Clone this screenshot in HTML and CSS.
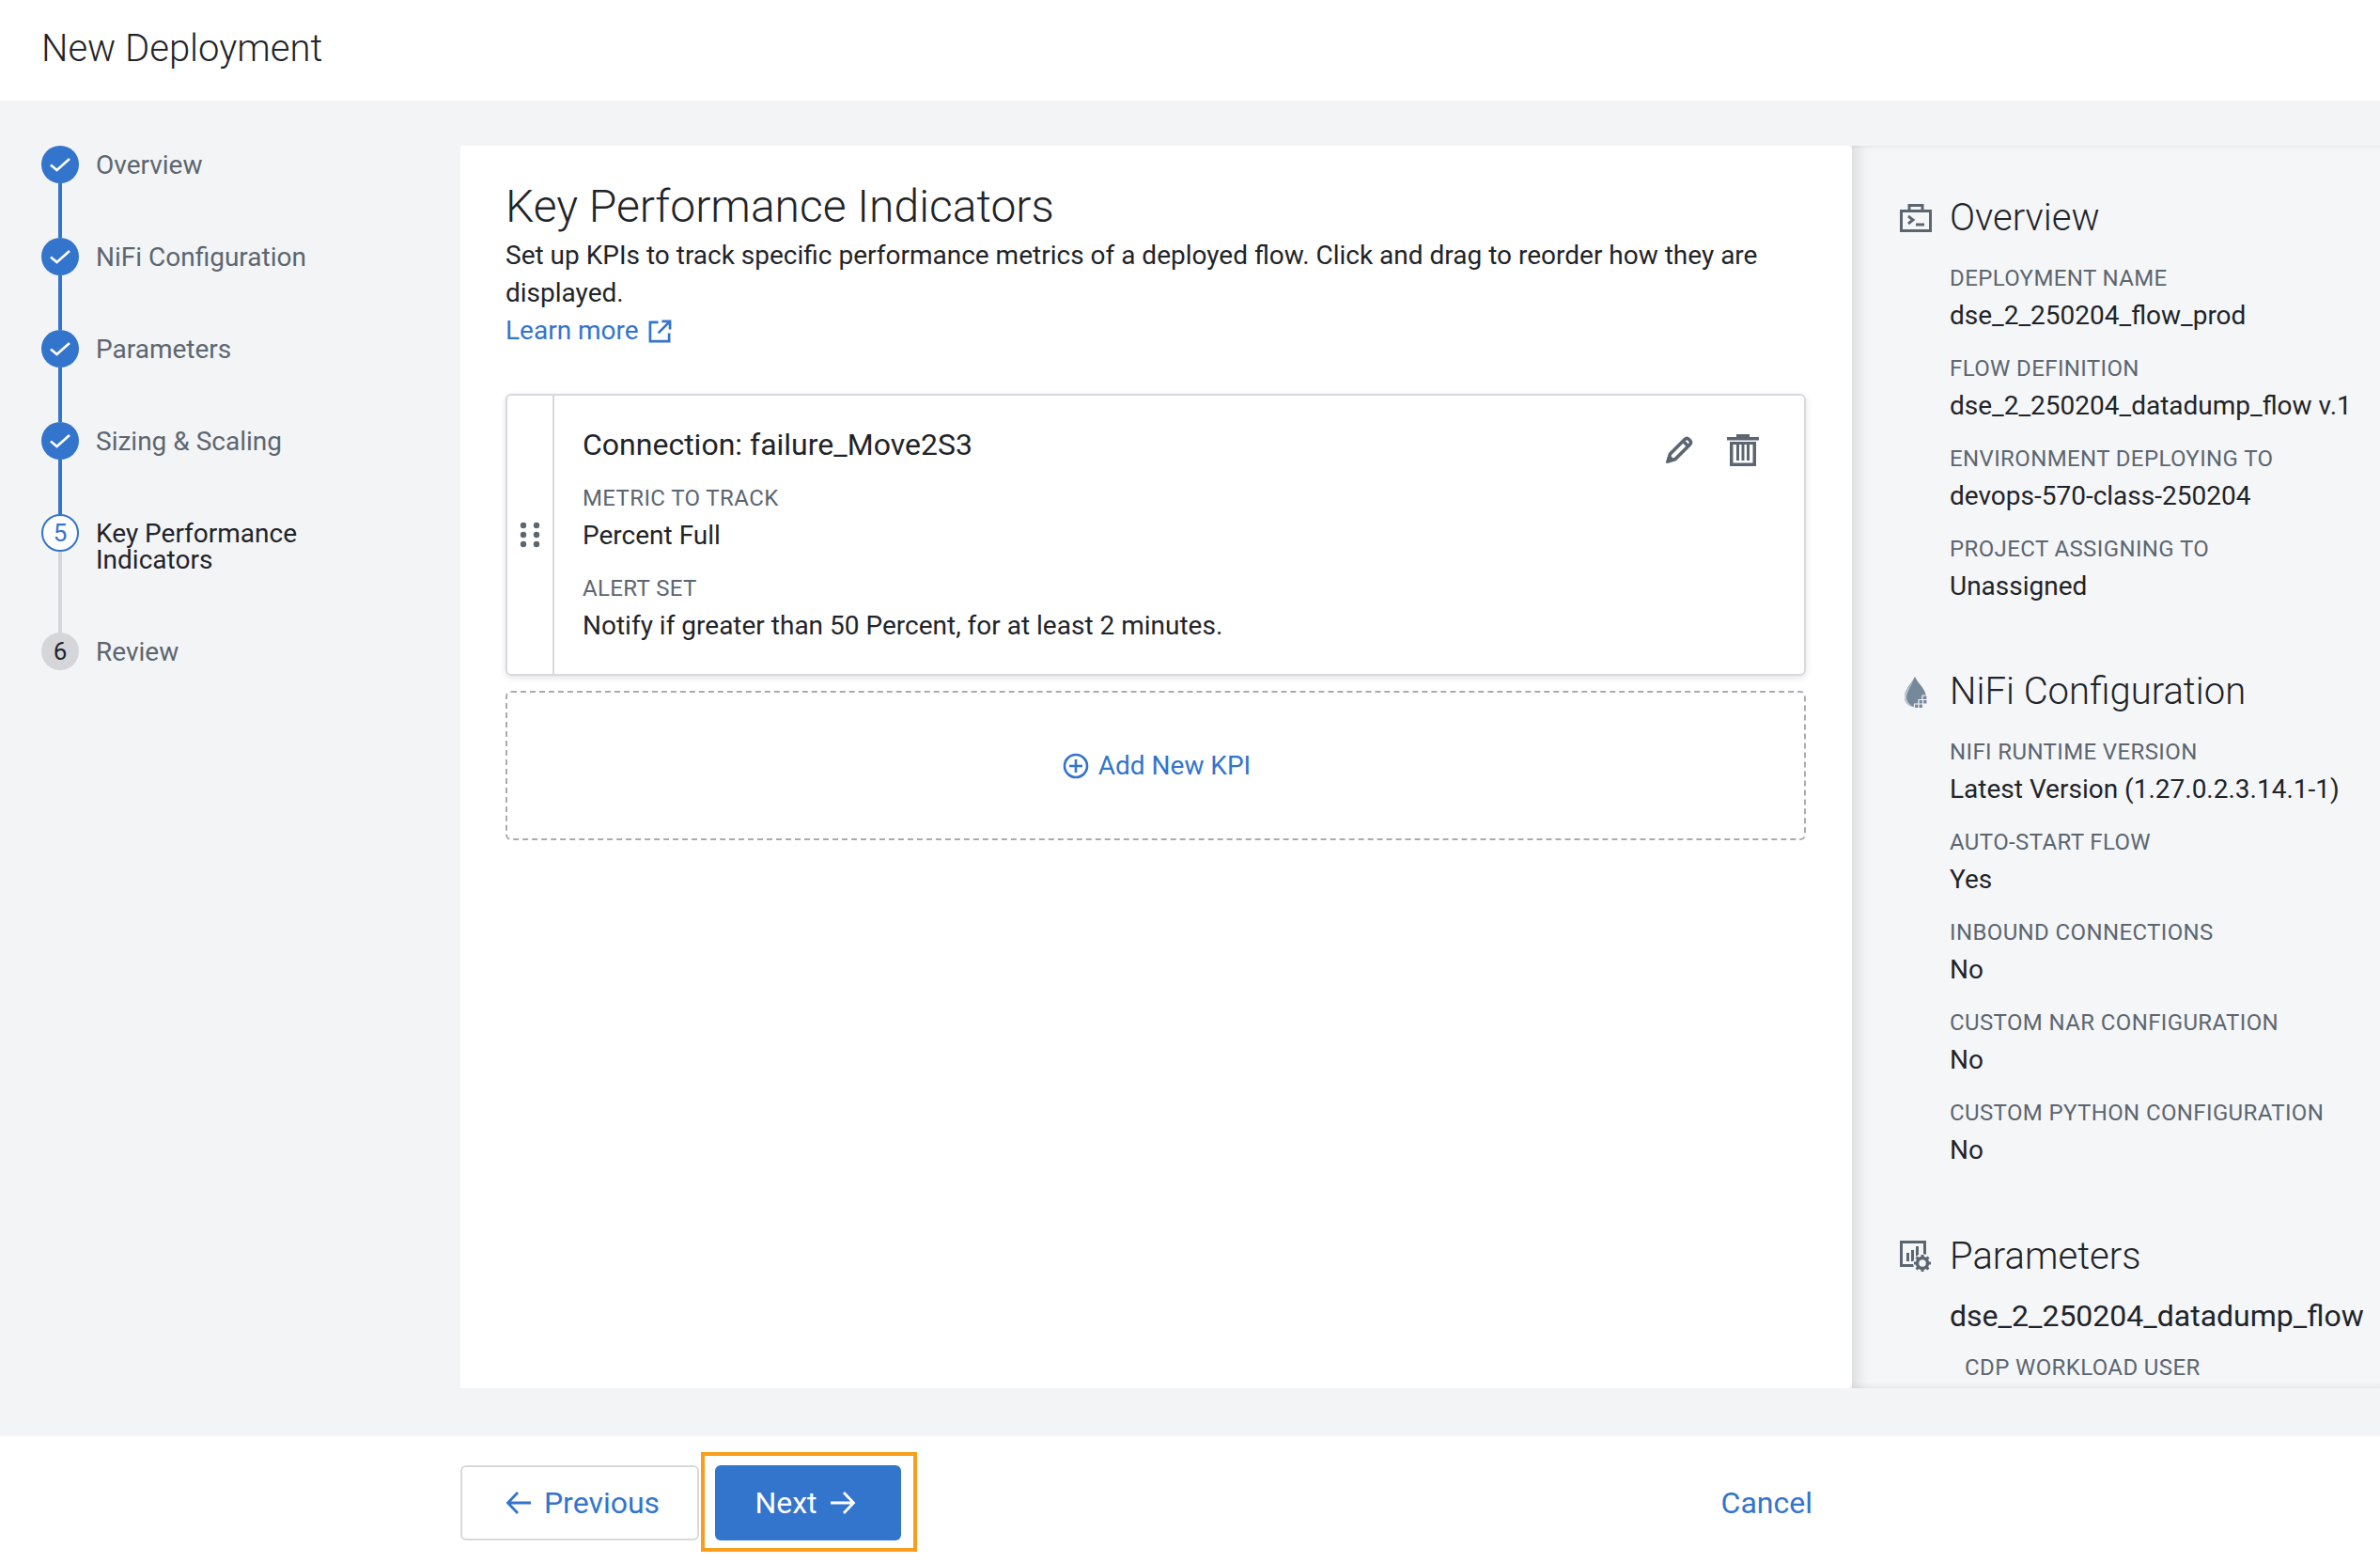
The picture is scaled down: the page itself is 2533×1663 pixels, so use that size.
FILE: index.html
```html
<!DOCTYPE html>
<html lang="en">
	<head>
		<meta charset="utf-8" />
		<title>New Deployment</title>
		<link rel="stylesheet" href="styles.css">
	</head>
	<body>
		<header class="topbar">New Deployment</header>
		<div class="page">
			<ol class="steps">
				<li class="step done">
					<div class="rail">
						<span class="dot"><svg width="22" height="16" viewBox="0 0 22 16"><path d="M1 8.500l6.500 5.500L21 2" fill="none" stroke="#fff" stroke-width="2.600"/></svg></span>
						<span class="line"></span>
					</div>
					<span class="step-name">Overview</span>
				</li>
				<li class="step done">
					<div class="rail">
						<span class="dot"><svg width="22" height="16" viewBox="0 0 22 16"><path d="M1 8.500l6.500 5.500L21 2" fill="none" stroke="#fff" stroke-width="2.600"/></svg></span>
						<span class="line"></span>
					</div>
					<span class="step-name">NiFi Configuration</span>
				</li>
				<li class="step done">
					<div class="rail">
						<span class="dot"><svg width="22" height="16" viewBox="0 0 22 16"><path d="M1 8.500l6.500 5.500L21 2" fill="none" stroke="#fff" stroke-width="2.600"/></svg></span>
						<span class="line"></span>
					</div>
					<span class="step-name">Parameters</span>
				</li>
				<li class="step done">
					<div class="rail">
						<span class="dot"><svg width="22" height="16" viewBox="0 0 22 16"><path d="M1 8.500l6.500 5.500L21 2" fill="none" stroke="#fff" stroke-width="2.600"/></svg></span>
						<span class="line"></span>
					</div>
					<span class="step-name">Sizing &amp; Scaling</span>
				</li>
				<li class="step current">
					<div class="rail">
						<span class="dot">5</span>
						<span class="line"></span>
					</div>
					<span class="step-name">Key Performance Indicators</span>
				</li>
				<li class="step todo">
					<div class="rail">
						<span class="dot">6</span>
					</div>
					<span class="step-name">Review</span>
				</li>
			</ol>

			<main class="content">
				<h1>Key Performance Indicators</h1>
				<p class="intro">Set up KPIs to track specific performance metrics of a deployed flow. Click and drag to reorder how they are displayed.</p>
				<a class="learn">Learn more
					<svg width="25" height="25" viewBox="0 0 26 26" fill="none" stroke="#3374cc" stroke-width="2.800"><path d="M11 3H2v21h21v-9"/><path d="M15 2h9v9M24 2L11 15"/></svg>
				</a>

				<div class="kpi">
					<div class="handle">
						<svg width="22" height="28" viewBox="0 0 22 28" fill="#5c6670"><circle cx="4" cy="4" r="3.200"/><circle cx="18" cy="4" r="3.200"/><circle cx="4" cy="14" r="3.200"/><circle cx="18" cy="14" r="3.200"/><circle cx="4" cy="24" r="3.200"/><circle cx="18" cy="24" r="3.200"/></svg>
					</div>
					<div class="kpi-body">
						<div class="kpi-title">Connection: failure_Move2S3</div>
						<div class="label">METRIC TO TRACK</div>
						<div class="value">Percent Full</div>
						<div class="label">ALERT SET</div>
						<div class="value">Notify if greater than 50 Percent, for at least 2 minutes.</div>
					</div>
					<div class="kpi-actions">
						<svg width="32" height="32" viewBox="0 0 32 32"><path d="M3 29l2.500-8L21 5.500c1.500-1.500 3-1.500 4.500 0l1 1c1.500 1.500 1.500 3 0 4.500L11 26.500z" fill="none" stroke="#5c6670" stroke-width="3.600" stroke-linejoin="round"/><path d="M1 31l3-10 7 7z" fill="#5c6670"/><path d="M19 7l6 6" stroke="#5c6670" stroke-width="3.600"/></svg>
						<svg width="34" height="34" viewBox="0 0 34 34" fill="#5c6670"><path d="M10 0h14v3h10v3.500H0V3h10z"/><path d="M3 8h28v26H3zm3.500 3v19.500h21V11z" fill-rule="evenodd"/><path d="M10 11h3v17h-3zM15.500 11h3v17h-3zM21 11h3v17h-3z"/></svg>
					</div>
				</div>

				<div class="add-kpi">
					<svg width="28" height="28" viewBox="0 0 28 28" fill="none" stroke="#3374cc" stroke-width="2.600"><circle cx="14" cy="14" r="12"/><path d="M14 7v14M7 14h14"/></svg>
					Add New KPI
				</div>
			</main>

			<aside class="summary">
				<div class="sum-head">
					<svg width="34" height="30" viewBox="0 0 34 30" fill="none" stroke="#5c6670" stroke-width="3"><path d="M1.500 7.500h31v21h-31zM10 7V1.500h14V7"/><path d="M9 13l5 4-5 4" stroke-width="3"/><path d="M17 22h9" stroke-width="3"/></svg>
					Overview
				</div>
				<div class="sum-body">
					<div class="label">DEPLOYMENT NAME</div>
					<div class="value">dse_2_250204_flow_prod</div>
					<div class="label">FLOW DEFINITION</div>
					<div class="value">dse_2_250204_datadump_flow v.1</div>
					<div class="label">ENVIRONMENT DEPLOYING TO</div>
					<div class="value">devops-570-class-250204</div>
					<div class="label">PROJECT ASSIGNING TO</div>
					<div class="value">Unassigned</div>
				</div>

				<div class="sum-head">
					<svg width="34" height="34" viewBox="0 0 34 34"><path d="M16 1c-3 7-11 13-11 22 0 6 5 10 11 10s12-4 12-10C28 14 19 8 16 1z" fill="#75899a"/><path d="M15 4C12 10 5 16 5 23c0 5 4 9 9 10-3-2-7-5-7-10 0-6 5-12 8-19z" fill="#c3ccd4"/><g fill="#75899a" stroke="#f5f6f8" stroke-width="1.200"><path d="M24 21h5v4.500h-5zM20 25.500h4.500V30H20zM24.500 25.500h4.500V30h-4.500zM15.500 30H20v4.500h-4.500zM20 30h4.500v4.500H20z"/></g></svg>
					NiFi Configuration
				</div>
				<div class="sum-body">
					<div class="label">NIFI RUNTIME VERSION</div>
					<div class="value">Latest Version (1.27.0.2.3.14.1-1)</div>
					<div class="label">AUTO-START FLOW</div>
					<div class="value">Yes</div>
					<div class="label">INBOUND CONNECTIONS</div>
					<div class="value">No</div>
					<div class="label">CUSTOM NAR CONFIGURATION</div>
					<div class="value">No</div>
					<div class="label">CUSTOM PYTHON CONFIGURATION</div>
					<div class="value">No</div>
				</div>

				<div class="sum-head params">
					<svg width="34" height="34" viewBox="0 0 34 34"><path d="M1.500 1.500h25v25h-25z" fill="none" stroke="#5c6670" stroke-width="3"/><path d="M7 13h3v9H7zM12 10h3v12h-3zM17 6h3v16h-3z" fill="#5c6670"/><circle cx="24" cy="24" r="10" fill="#f5f6f8"/><circle cx="24" cy="24" r="5.500" fill="none" stroke="#5c6670" stroke-width="3.500"/><path d="M24 15v18M15 24h18M17.500 17.500l13 13M30.500 17.500l-13 13" stroke="#5c6670" stroke-width="3" stroke-dasharray="3 12 3 0"/></svg>
					Parameters
				</div>
				<div class="sum-body">
					<div class="param-group">dse_2_250204_datadump_flow</div>
					<div class="label nested">CDP WORKLOAD USER</div>
				</div>
			</aside>
		</div>

		<footer class="actions">
			<button class="btn btn-prev">
				<svg width="28" height="26" viewBox="0 0 28 26" fill="none" stroke="#3374cc" stroke-width="2.800"><path d="M27 13H3M13 2L2.500 13 13 24"/></svg>
				Previous
			</button>
			<button class="btn btn-next">
				Next
				<svg width="28" height="26" viewBox="0 0 28 26" fill="none" stroke="#fff" stroke-width="2.800"><path d="M1 13h24M15 2l10.500 11L15 24"/></svg>
			</button>
			<a class="cancel">Cancel</a>
		</footer>
	</body>
</html>
```

FILE: styles.css
```css
*{
	padding: 0;
	margin: 0;
	box-sizing: border-box;
}
body {
	font-family: Roboto, "Liberation Sans", sans-serif;
	font-size: 28px;
	line-height: 40px;
	color: #1f2429;
	background: #fff;
	height: 1663px;
	overflow: hidden;
}
li {
	list-style: none;
}

.topbar {
	height: 107px;
	padding: 30px 0 0 44px;
	font-size: 40px;
	font-weight: 300;
	line-height: 44px;
}

.page {
	display: flex;
	height: 1421px;
	padding: 48px 0 51px;
	background: #f3f4f6;
}

/* stepper */
.steps {
	width: 490px;
	flex: none;
	padding-left: 44px;
}
.step {
	display: flex;
	gap: 18px;
	height: 98px;
	color: #5c6670;
}
.step.current {
	height: 126px;
	color: #1f2429;
}
.step.todo {
	height: 40px;
}
.rail {
	display: flex;
	flex-direction: column;
	align-items: center;
	width: 40px;
	flex: none;
}
.dot {
	display: flex;
	align-items: center;
	justify-content: center;
	width: 40px;
	height: 40px;
	flex: none;
	border-radius: 50%;
	background: #3374cc;
}
.line {
	flex: 1;
	width: 4px;
	background: #3374cc;
}
.step.current .dot {
	background: #fff;
	border: 2px solid #3374cc;
	color: #3374cc;
	font-size: 26px;
}
.step.current .line {
	background: #d5d6da;
}
.step.todo .dot {
	background: #d5d6da;
	color: #1f2429;
	font-size: 26px;
}
.step-name {
	padding-top: 1px;
	line-height: 40px;
}
.step.current .step-name {
	line-height: 28px;
	padding-top: 7px;
	width: 260px;
}

/* main card */
.content {
	width: 1481px;
	flex: none;
	padding: 37px 49px 0 48px;
	background: #fff;
	border-radius: 0 6px 6px 0;
}
h1 {
	font-size: 48px;
	font-weight: 300;
	line-height: 56px;
	margin-bottom: 4px;
}
.learn {
	display: inline-flex;
	align-items: center;
	gap: 10px;
	color: #3374cc;
}
.kpi {
	display: flex;
	width: 1384px;
	height: 300px;
	margin-top: 47px;
	border: 2px solid #d8d9de;
	border-radius: 6px;
	box-shadow: 0 2px 6px rgba(0,0,0,.12);
}
.handle {
	display: flex;
	align-items: center;
	justify-content: center;
	width: 50px;
	flex: none;
	border-right: 2px solid #d8d9de;
}
.kpi-body {
	flex: 1;
	padding: 30px 0 0 30px;
}
.kpi-title {
	font-size: 32px;
	line-height: 44px;
	margin-bottom: 19px;
}
.label {
	font-size: 24px;
	line-height: 32px;
	letter-spacing: .38px;
	color: #5c6670;
}
.value {
	margin: 4px 0 20px;
}
.kpi-actions {
	display: flex;
	gap: 34px;
	align-items: flex-start;
	padding: 41px 48px 0 0;
}
.add-kpi {
	display: flex;
	align-items: center;
	justify-content: center;
	gap: 10px;
	width: 1384px;
	height: 159px;
	margin-top: 16px;
	padding-left: 2px;
	border: 2px dashed #a9abb0;
	border-radius: 6px;
	color: #3374cc;
}

/* right summary */
.summary {
	flex: 1;
	padding: 52px 0 0 51px;
	overflow: hidden;
	white-space: nowrap;
	background: #f5f6f8;
	box-shadow: inset 16px 0 16px -10px rgba(0,0,0,.11), inset 0 4px 4px -3px rgba(0,0,0,.06), inset 0 -7px 7px -6px rgba(0,0,0,.08);
}
.sum-head {
	display: flex;
	align-items: center;
	gap: 19px;
	height: 48px;
	padding-top: 2px;
	font-size: 40px;
	font-weight: 300;
}
.sum-head.params {
	margin-top: 1px;
}
.sum-body {
	padding: 25px 0 47px 53px;
}
.param-group {
	font-size: 32px;
	line-height: 44px;
	margin: -7px 0 17px;
}
.label.nested {
	padding-left: 16px;
}

/* footer */
.actions {
	display: flex;
	align-items: flex-start;
	height: 135px;
	padding: 31px 604px 0 490px;
}
.btn {
	display: flex;
	align-items: center;
	justify-content: center;
	gap: 13px;
	height: 80px;
	font: inherit;
	font-size: 32px;
	border-radius: 6px;
}
.btn-prev {
	width: 254px;
	padding-left: 6px;
	background: #fff;
	border: 2px solid #d8d9de;
	color: #3374cc;
}
.btn-next {
	position: relative;
	width: 198px;
	margin-left: 17px;
	padding-right: 6px;
	background: #3374cc;
	border: 0;
	color: #fff;
}
.btn-next::after {
	content: "";
	position: absolute;
	inset: -14px -17px -12px -15px;
	border: 4px solid #f99d1c;
}
.cancel {
	margin-left: auto;
	font-size: 32px;
	line-height: 80px;
	color: #3374cc;
}
```
